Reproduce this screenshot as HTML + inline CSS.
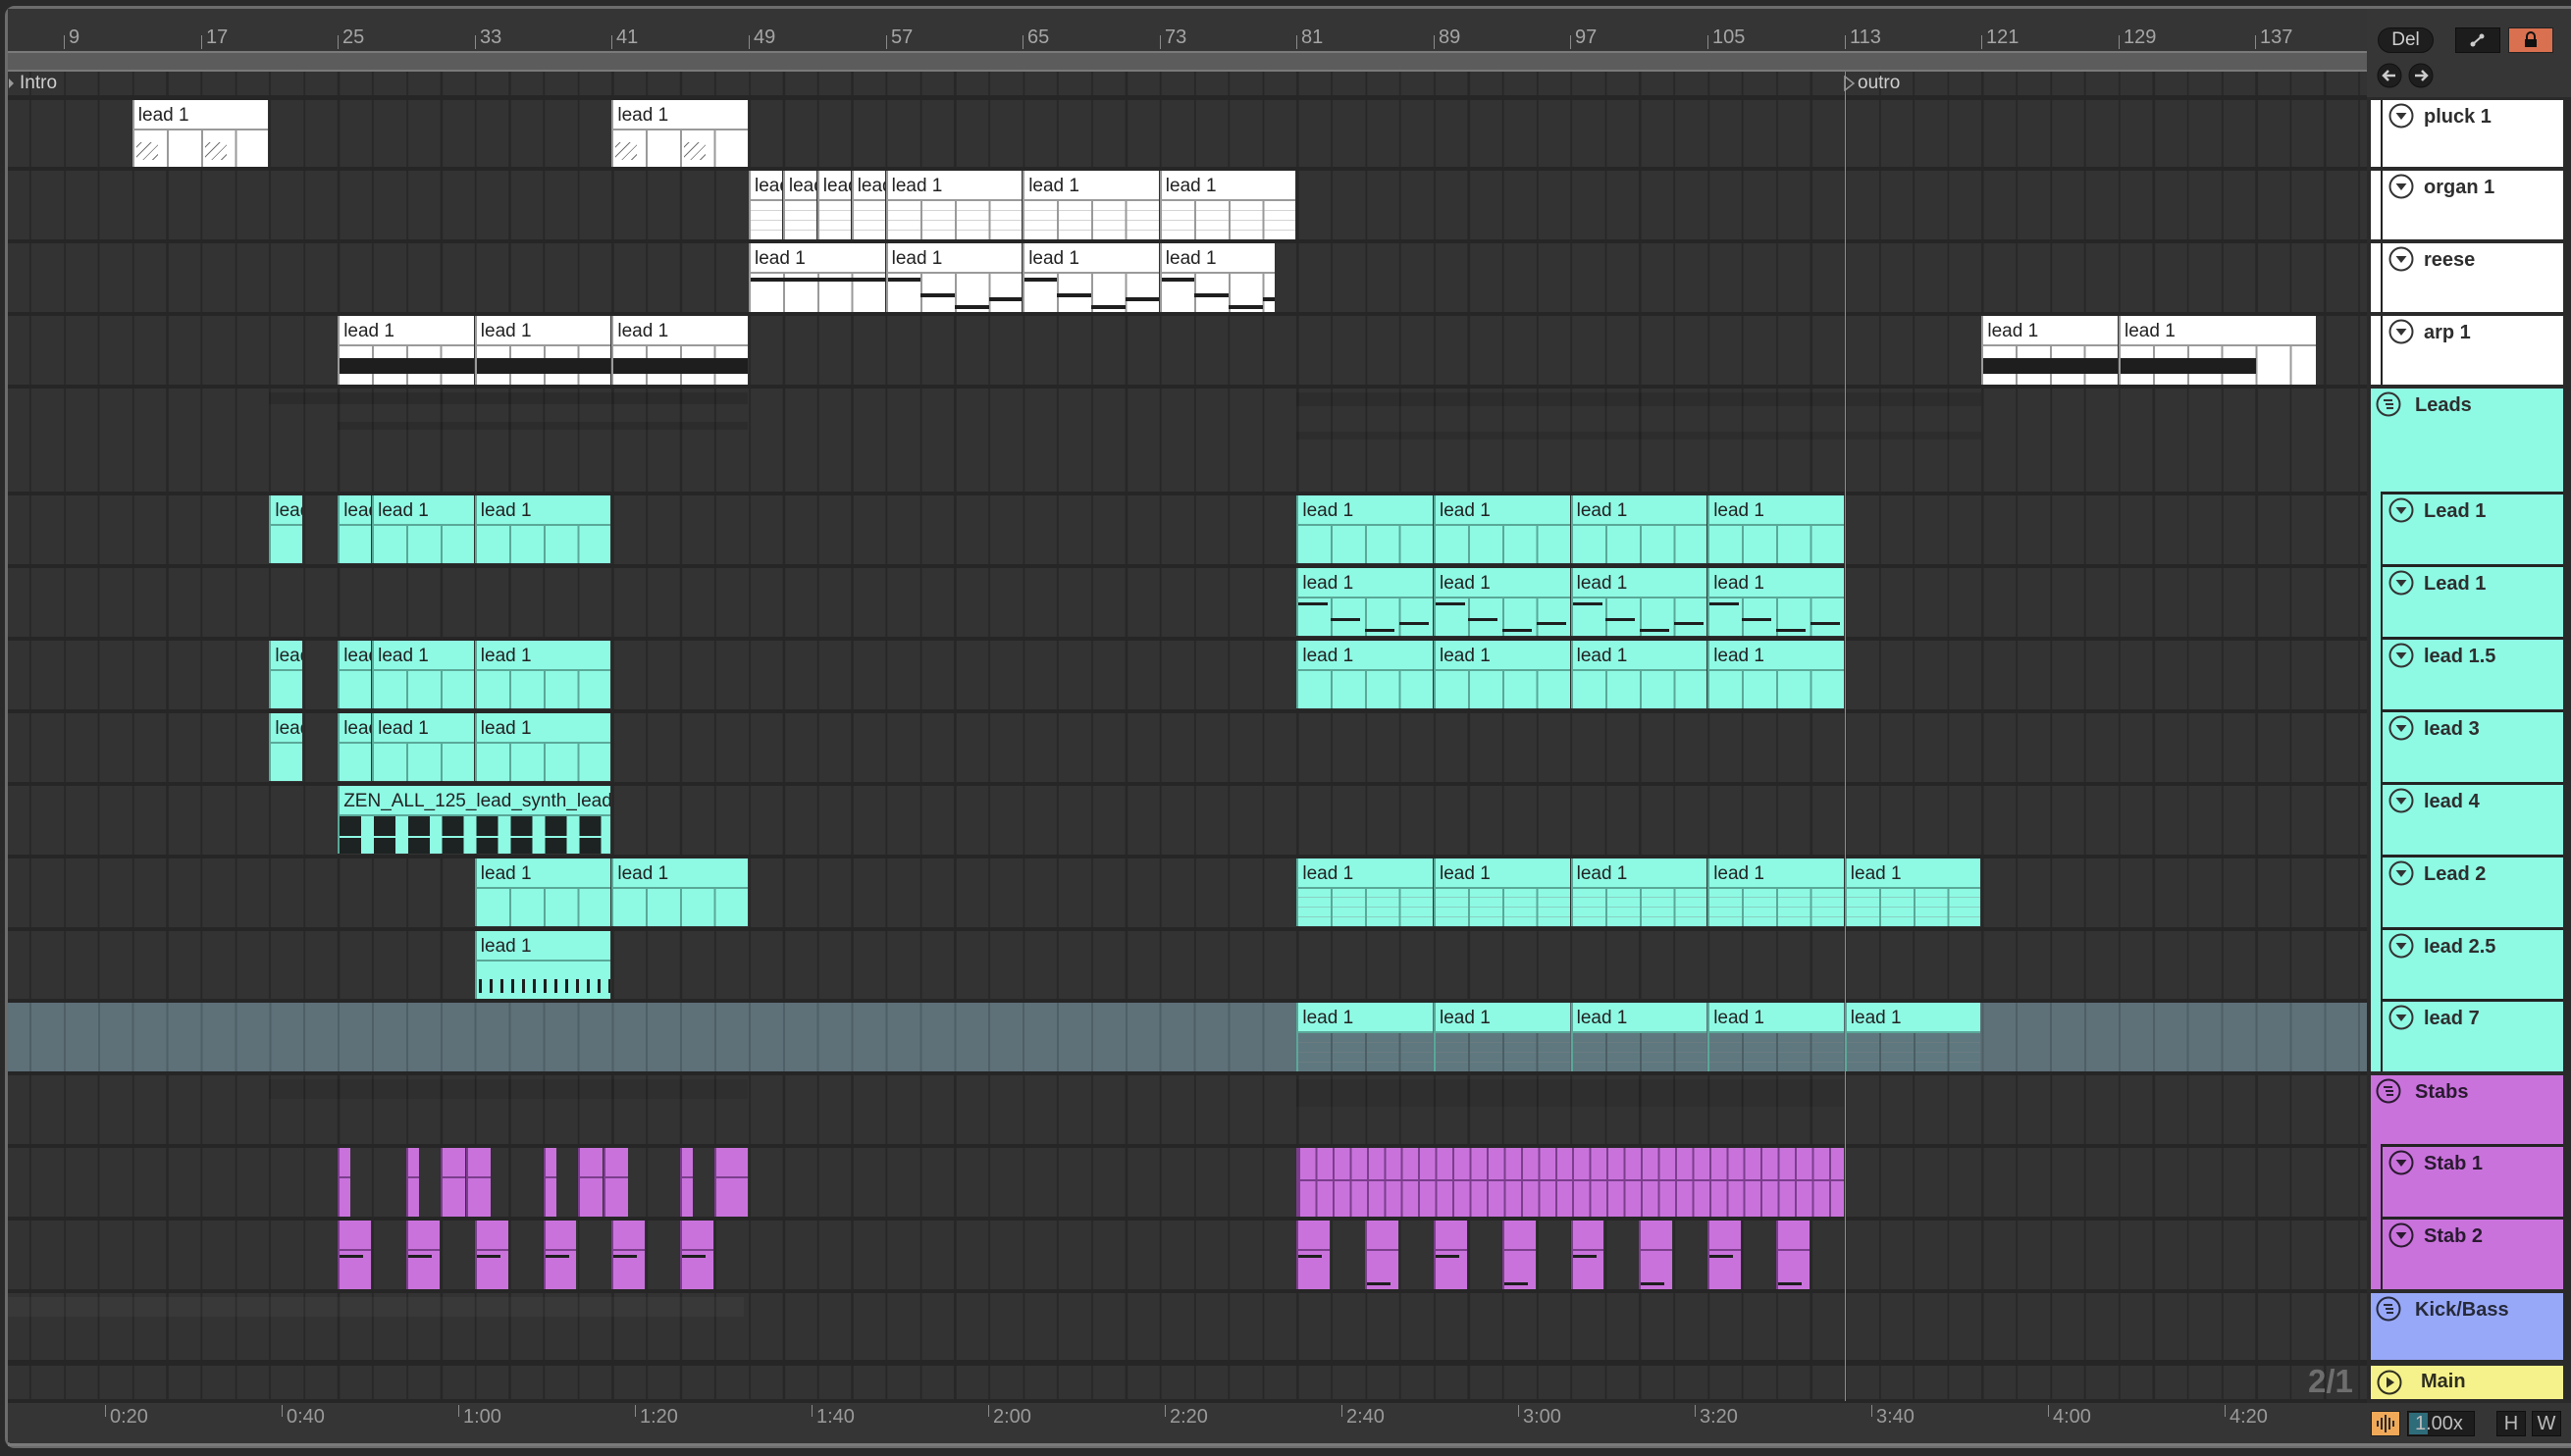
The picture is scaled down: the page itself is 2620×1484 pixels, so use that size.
<!DOCTYPE html>
<html><head><meta charset="utf-8"><style>
*{box-sizing:border-box;margin:0;padding:0}
body{width:2620px;height:1484px;overflow:hidden;background:#2a2a2a;position:relative;font-family:"Liberation Sans",sans-serif}
.abs{position:absolute}
#frame{position:absolute;left:5px;top:6px;width:2640px;height:1470px;border:3px solid #6c6c6c;border-radius:10px;background:#353535}
#grid{position:absolute;left:8px;top:73px;width:2404px;height:1355px;background-color:#333;background-image:repeating-linear-gradient(90deg,#272727 0 2px,transparent 2px 34.9px);background-position:22px 0}
.sep{position:absolute;left:8px;width:2404px;height:4px;background:#262626}
.r{position:absolute;left:0;width:2412px}
.c{position:absolute;top:0;height:100%;left:calc(65px + (var(--s) - 9) * 17.45px);width:calc((var(--e) - var(--s)) * 17.45px - 1px);overflow:hidden;border-left:2px solid var(--l)}
.c .n{height:31px;line-height:31px;padding-left:4px;font-size:19px;color:#222;white-space:nowrap;overflow:hidden;border-bottom:2px solid var(--l)}
.c .b{position:absolute;top:31px;left:-2px;right:0;bottom:0;background-image:repeating-linear-gradient(90deg,var(--l) 0 2px,transparent 2px 34.9px)}
.w{background:#fff;--l:#9a9a9a}
.cy{background:#8efae4;--l:#5aa898}
.pu{background:#c972dc;--l:#7b3e8c}
.dots{background-image:repeating-linear-gradient(90deg,var(--l) 0 2px,transparent 2px 34.9px),repeating-linear-gradient(0deg,transparent 0 9px,rgba(130,130,130,.35) 9px 10px) !important}
.ln{position:absolute;height:4px;background:#1e1e1e}
.th{position:absolute;left:2416px;width:196px;font-weight:bold;font-size:20px;color:#2e2e2e}
.th .in{position:absolute;left:10px;top:0;right:0;bottom:0;border-left:2px solid #232323}
.th svg{position:absolute}
.th span{position:absolute;top:6px}
.rl{position:absolute;top:27px;font-size:20px;color:#a5a5a5}
.tk{position:absolute;top:36px;width:1px;height:14px;background:#8a8a8a}
.tl{position:absolute;top:1433px;font-size:20px;color:#9a9a9a}
.tt{position:absolute;top:1432px;width:1px;height:12px;background:#8a8a8a}
.nt{position:absolute;left:4px;top:12px;width:22px;height:18px;background:repeating-linear-gradient(135deg,transparent 0 3px,rgba(0,0,0,.55) 3px 4px,transparent 4px 7px)}
</style></head><body>
<div id="frame"></div>
<div class="abs" style="left:8px;top:9px;width:2404px;height:43px;background:#353535"></div>
<div class="abs" style="left:8px;top:52px;width:2404px;height:21px;background:#5c5c5c;border-top:2px solid #7a7a7a;border-bottom:2px solid #7a7a7a"></div>
<div class="tk" style="left:65px"></div><div class="rl" style="left:70px">9</div>
<div class="tk" style="left:205px"></div><div class="rl" style="left:210px">17</div>
<div class="tk" style="left:344px"></div><div class="rl" style="left:349px">25</div>
<div class="tk" style="left:484px"></div><div class="rl" style="left:489px">33</div>
<div class="tk" style="left:623px"></div><div class="rl" style="left:628px">41</div>
<div class="tk" style="left:763px"></div><div class="rl" style="left:768px">49</div>
<div class="tk" style="left:903px"></div><div class="rl" style="left:908px">57</div>
<div class="tk" style="left:1042px"></div><div class="rl" style="left:1047px">65</div>
<div class="tk" style="left:1182px"></div><div class="rl" style="left:1187px">73</div>
<div class="tk" style="left:1321px"></div><div class="rl" style="left:1326px">81</div>
<div class="tk" style="left:1461px"></div><div class="rl" style="left:1466px">89</div>
<div class="tk" style="left:1600px"></div><div class="rl" style="left:1605px">97</div>
<div class="tk" style="left:1740px"></div><div class="rl" style="left:1745px">105</div>
<div class="tk" style="left:1880px"></div><div class="rl" style="left:1885px">113</div>
<div class="tk" style="left:2019px"></div><div class="rl" style="left:2024px">121</div>
<div class="tk" style="left:2159px"></div><div class="rl" style="left:2164px">129</div>
<div class="tk" style="left:2298px"></div><div class="rl" style="left:2303px">137</div>

<div id="grid"></div>
<div class="abs" style="left:274px;top:400px;width:488px;height:12px;background:rgba(0,0,0,.12)"></div>
<div class="abs" style="left:344px;top:430px;width:418px;height:8px;background:rgba(0,0,0,.12)"></div>
<div class="abs" style="left:1321px;top:400px;width:698px;height:14px;background:rgba(0,0,0,.1)"></div>
<div class="abs" style="left:1321px;top:440px;width:698px;height:8px;background:rgba(0,0,0,.1)"></div>
<div class="abs" style="left:1321px;top:1100px;width:558px;height:28px;background:rgba(0,0,0,.08)"></div>
<div class="abs" style="left:274px;top:1100px;width:488px;height:20px;background:rgba(0,0,0,.08)"></div>
<div class="abs" style="left:8px;top:1322px;width:750px;height:20px;background:rgba(255,255,255,.03)"></div>
<div class="abs" style="left:8px;top:1022px;width:2404px;height:70px;background-color:#5e7078;background-image:repeating-linear-gradient(90deg,#4f5f66 0 2px,transparent 2px 34.9px);background-position:22px 0"></div>

<div class="sep" style="top:97px;height:5px"></div>
<div class="sep" style="top:170px"></div>
<div class="sep" style="top:244px"></div>
<div class="sep" style="top:318px"></div>
<div class="sep" style="top:392px"></div>
<div class="sep" style="top:501px"></div>
<div class="sep" style="top:575px"></div>
<div class="sep" style="top:649px"></div>
<div class="sep" style="top:723px"></div>
<div class="sep" style="top:797px"></div>
<div class="sep" style="top:871px"></div>
<div class="sep" style="top:945px"></div>
<div class="sep" style="top:1018px"></div>
<div class="sep" style="top:1092px"></div>
<div class="sep" style="top:1166px"></div>
<div class="sep" style="top:1240px"></div>
<div class="sep" style="top:1314px"></div>
<div class="sep" style="top:1386px;height:6px"></div>
<div class="sep" style="top:1426px;height:4px"></div>

<div class="abs" style="left:9px;top:80px;width:0;height:0;border-top:5px solid transparent;border-bottom:5px solid transparent;border-left:5px solid #999"></div>
<div class="abs" style="left:20px;top:74px;font-size:19px;color:#cfcfcf">Intro</div>
<div class="abs" style="left:1880px;top:73px;width:1px;height:1355px;background:#8d8d8d"></div>
<svg class="abs" style="left:1879px;top:77px" width="12" height="16"><path d="M1 1L10 8L1 15Z" fill="none" stroke="#999" stroke-width="1.5"/></svg>
<div class="abs" style="left:1893px;top:74px;font-size:19px;color:#cfcfcf">outro</div>

<div class="r" style="top:102px;height:68px">
<div class="c w" style="--s:13;--e:21"><div class="n">lead 1</div><div class="b"><div class="nt"></div><div class="nt" style="left:74px"></div></div></div>
<div class="c w" style="--s:41;--e:49"><div class="n">lead 1</div><div class="b"><div class="nt"></div><div class="nt" style="left:74px"></div></div></div>
</div>
<div class="r" style="top:174px;height:70px">
<div class="c w" style="--s:49;--e:51"><div class="n">lead 1</div><div class="b dots"></div></div>
<div class="c w" style="--s:51;--e:53"><div class="n">lead 1</div><div class="b dots"></div></div>
<div class="c w" style="--s:53;--e:55"><div class="n">lead 1</div><div class="b dots"></div></div>
<div class="c w" style="--s:55;--e:57"><div class="n">lead 1</div><div class="b dots"></div></div>
<div class="c w" style="--s:57;--e:65"><div class="n">lead 1</div><div class="b dots"></div></div>
<div class="c w" style="--s:65;--e:73"><div class="n">lead 1</div><div class="b dots"></div></div>
<div class="c w" style="--s:73;--e:81"><div class="n">lead 1</div><div class="b dots"></div></div>
</div>
<div class="r" style="top:248px;height:70px">
<div class="c w" style="--s:49;--e:57"><div class="n">lead 1</div><div class="b"><div class="ln" style="left:0;right:0;top:4px"></div></div></div>
<div class="c w" style="--s:57;--e:65"><div class="n">lead 1</div><div class="b"><div class="ln" style="left:0;width:35px;top:4px"></div><div class="ln" style="left:35px;width:35px;top:20px"></div><div class="ln" style="left:70px;width:35px;top:32px"></div><div class="ln" style="left:105px;width:35px;top:24px"></div></div></div>
<div class="c w" style="--s:65;--e:73"><div class="n">lead 1</div><div class="b"><div class="ln" style="left:0;width:35px;top:4px"></div><div class="ln" style="left:35px;width:35px;top:20px"></div><div class="ln" style="left:70px;width:35px;top:32px"></div><div class="ln" style="left:105px;width:35px;top:24px"></div></div></div>
<div class="c w" style="--s:73;--e:79.8"><div class="n">lead 1</div><div class="b"><div class="ln" style="left:0;width:35px;top:4px"></div><div class="ln" style="left:35px;width:35px;top:20px"></div><div class="ln" style="left:70px;width:35px;top:32px"></div><div class="ln" style="left:105px;width:35px;top:24px"></div></div></div>
</div>
<div class="r" style="top:322px;height:70px">
<div class="c w" style="--s:25;--e:33"><div class="n">lead 1</div><div class="b"><div class="ln" style="left:0;right:0;top:12px;height:16px"></div></div></div>
<div class="c w" style="--s:33;--e:41"><div class="n">lead 1</div><div class="b"><div class="ln" style="left:0;right:0;top:12px;height:16px"></div></div></div>
<div class="c w" style="--s:41;--e:49"><div class="n">lead 1</div><div class="b"><div class="ln" style="left:0;right:0;top:12px;height:16px"></div></div></div>
<div class="c w" style="--s:121;--e:129"><div class="n">lead 1</div><div class="b"><div class="ln" style="left:0;right:0;top:12px;height:16px"></div></div></div>
<div class="c w" style="--s:129;--e:140.6"><div class="n">lead 1</div><div class="b"><div class="ln" style="left:0;width:140px;top:12px;height:16px"></div></div></div>
</div>
<div class="r" style="top:505px;height:69px">
<div class="c cy" style="--s:21;--e:23"><div class="n">lead 1</div><div class="b"></div></div>
<div class="c cy" style="--s:25;--e:27"><div class="n">lead 1</div><div class="b"></div></div>
<div class="c cy" style="--s:27;--e:33"><div class="n">lead 1</div><div class="b"></div></div>
<div class="c cy" style="--s:33;--e:41"><div class="n">lead 1</div><div class="b"></div></div>
<div class="c cy" style="--s:81;--e:89"><div class="n">lead 1</div><div class="b"></div></div>
<div class="c cy" style="--s:89;--e:97"><div class="n">lead 1</div><div class="b"></div></div>
<div class="c cy" style="--s:97;--e:105"><div class="n">lead 1</div><div class="b"></div></div>
<div class="c cy" style="--s:105;--e:113"><div class="n">lead 1</div><div class="b"></div></div>
</div>
<div class="r" style="top:579px;height:69px">
<div class="c cy" style="--s:81;--e:89"><div class="n">lead 1</div><div class="b"><div class="ln" style="left:2px;width:30px;top:4px;height:3px"></div><div class="ln" style="left:35px;width:30px;top:20px;height:3px"></div><div class="ln" style="left:70px;width:30px;top:31px;height:3px"></div><div class="ln" style="left:105px;width:30px;top:24px;height:3px"></div></div></div>
<div class="c cy" style="--s:89;--e:97"><div class="n">lead 1</div><div class="b"><div class="ln" style="left:2px;width:30px;top:4px;height:3px"></div><div class="ln" style="left:35px;width:30px;top:20px;height:3px"></div><div class="ln" style="left:70px;width:30px;top:31px;height:3px"></div><div class="ln" style="left:105px;width:30px;top:24px;height:3px"></div></div></div>
<div class="c cy" style="--s:97;--e:105"><div class="n">lead 1</div><div class="b"><div class="ln" style="left:2px;width:30px;top:4px;height:3px"></div><div class="ln" style="left:35px;width:30px;top:20px;height:3px"></div><div class="ln" style="left:70px;width:30px;top:31px;height:3px"></div><div class="ln" style="left:105px;width:30px;top:24px;height:3px"></div></div></div>
<div class="c cy" style="--s:105;--e:113"><div class="n">lead 1</div><div class="b"><div class="ln" style="left:2px;width:30px;top:4px;height:3px"></div><div class="ln" style="left:35px;width:30px;top:20px;height:3px"></div><div class="ln" style="left:70px;width:30px;top:31px;height:3px"></div><div class="ln" style="left:105px;width:30px;top:24px;height:3px"></div></div></div>
</div>
<div class="r" style="top:653px;height:69px">
<div class="c cy" style="--s:21;--e:23"><div class="n">lead 1</div><div class="b"></div></div>
<div class="c cy" style="--s:25;--e:27"><div class="n">lead 1</div><div class="b"></div></div>
<div class="c cy" style="--s:27;--e:33"><div class="n">lead 1</div><div class="b"></div></div>
<div class="c cy" style="--s:33;--e:41"><div class="n">lead 1</div><div class="b"></div></div>
<div class="c cy" style="--s:81;--e:89"><div class="n">lead 1</div><div class="b"></div></div>
<div class="c cy" style="--s:89;--e:97"><div class="n">lead 1</div><div class="b"></div></div>
<div class="c cy" style="--s:97;--e:105"><div class="n">lead 1</div><div class="b"></div></div>
<div class="c cy" style="--s:105;--e:113"><div class="n">lead 1</div><div class="b"></div></div>
</div>
<div class="r" style="top:727px;height:69px">
<div class="c cy" style="--s:21;--e:23"><div class="n">lead 1</div><div class="b"></div></div>
<div class="c cy" style="--s:25;--e:27"><div class="n">lead 1</div><div class="b"></div></div>
<div class="c cy" style="--s:27;--e:33"><div class="n">lead 1</div><div class="b"></div></div>
<div class="c cy" style="--s:33;--e:41"><div class="n">lead 1</div><div class="b"></div></div>
</div>
<div class="r" style="top:801px;height:69px">
<div class="c cy" style="--s:25;--e:41"><div class="n">ZEN_ALL_125_lead_synth_lead</div><div class="b" style="background-image:linear-gradient(0deg,transparent 0 16px,#8efae4 16px 18px,transparent 18px),repeating-linear-gradient(90deg,#1d2322 0 22px,transparent 22px 34.9px);background-position:0 0,2px 0"></div></div>
</div>
<div class="r" style="top:875px;height:69px">
<div class="c cy" style="--s:33;--e:41"><div class="n">lead 1</div><div class="b"></div></div>
<div class="c cy" style="--s:41;--e:49"><div class="n">lead 1</div><div class="b"></div></div>
<div class="c cy" style="--s:81;--e:89"><div class="n">lead 1</div><div class="b dots"></div></div>
<div class="c cy" style="--s:89;--e:97"><div class="n">lead 1</div><div class="b dots"></div></div>
<div class="c cy" style="--s:97;--e:105"><div class="n">lead 1</div><div class="b dots"></div></div>
<div class="c cy" style="--s:105;--e:113"><div class="n">lead 1</div><div class="b dots"></div></div>
<div class="c cy" style="--s:113;--e:121"><div class="n">lead 1</div><div class="b dots"></div></div>
</div>
<div class="r" style="top:949px;height:69px">
<div class="c cy" style="--s:33;--e:41"><div class="n">lead 1</div><div class="b" style="background-image:linear-gradient(0deg,#8efae4 0 6px,transparent 6px 20px,#8efae4 20px),repeating-linear-gradient(90deg,transparent 0 4px,#1d1d1d 4px 7px,transparent 7px 11px)"></div></div>
</div>
<div class="r" style="top:1022px;height:70px">
<div class="c cy" style="--s:81;--e:89"><div class="n">lead 1</div><div class="b dots" style="background-color:#5f7880;--l:#4b5e64"></div></div>
<div class="c cy" style="--s:89;--e:97"><div class="n">lead 1</div><div class="b dots" style="background-color:#5f7880;--l:#4b5e64"></div></div>
<div class="c cy" style="--s:97;--e:105"><div class="n">lead 1</div><div class="b dots" style="background-color:#5f7880;--l:#4b5e64"></div></div>
<div class="c cy" style="--s:105;--e:113"><div class="n">lead 1</div><div class="b dots" style="background-color:#5f7880;--l:#4b5e64"></div></div>
<div class="c cy" style="--s:113;--e:121"><div class="n">lead 1</div><div class="b dots" style="background-color:#5f7880;--l:#4b5e64"></div></div>
</div>
<div class="r" style="top:1170px;height:70px">
<div class="c pu" style="--s:25;--e:25.8"><div class="n"></div><div class="b"></div></div>
<div class="c pu" style="--s:29;--e:29.8"><div class="n"></div><div class="b"></div></div>
<div class="c pu" style="--s:31;--e:32.5"><div class="n"></div><div class="b"></div></div>
<div class="c pu" style="--s:32.5;--e:34"><div class="n"></div><div class="b"></div></div>
<div class="c pu" style="--s:37;--e:37.8"><div class="n"></div><div class="b"></div></div>
<div class="c pu" style="--s:39;--e:40.5"><div class="n"></div><div class="b"></div></div>
<div class="c pu" style="--s:40.5;--e:42"><div class="n"></div><div class="b"></div></div>
<div class="c pu" style="--s:45;--e:45.8"><div class="n"></div><div class="b"></div></div>
<div class="c pu" style="--s:47;--e:49"><div class="n"></div><div class="b"></div></div>
<div class="abs pu" style="left:1321px;top:0;width:558px;height:70px;border-left:2px solid #7b3e8c;background-image:linear-gradient(0deg,transparent 0 36px,#7b3e8c 36px 38px,transparent 38px),repeating-linear-gradient(90deg,#7b3e8c 0 2px,transparent 2px 17.45px)"></div>
</div>
<div class="r" style="top:1244px;height:70px">
<div class="c pu" style="--s:25;--e:27"><div class="n"></div><div class="b"><div class="ln" style="left:2px;width:24px;top:4px;height:3px"></div></div></div>
<div class="c pu" style="--s:29;--e:31"><div class="n"></div><div class="b"><div class="ln" style="left:2px;width:24px;top:4px;height:3px"></div></div></div>
<div class="c pu" style="--s:33;--e:35"><div class="n"></div><div class="b"><div class="ln" style="left:2px;width:24px;top:4px;height:3px"></div></div></div>
<div class="c pu" style="--s:37;--e:39"><div class="n"></div><div class="b"><div class="ln" style="left:2px;width:24px;top:4px;height:3px"></div></div></div>
<div class="c pu" style="--s:41;--e:43"><div class="n"></div><div class="b"><div class="ln" style="left:2px;width:24px;top:4px;height:3px"></div></div></div>
<div class="c pu" style="--s:45;--e:47"><div class="n"></div><div class="b"><div class="ln" style="left:2px;width:24px;top:4px;height:3px"></div></div></div>
<div class="c pu" style="--s:81;--e:83"><div class="n"></div><div class="b"><div class="ln" style="left:2px;width:24px;top:4px;height:3px"></div></div></div>
<div class="c pu" style="--s:85;--e:87"><div class="n"></div><div class="b"><div class="ln" style="left:2px;width:24px;top:32px;height:3px"></div></div></div>
<div class="c pu" style="--s:89;--e:91"><div class="n"></div><div class="b"><div class="ln" style="left:2px;width:24px;top:4px;height:3px"></div></div></div>
<div class="c pu" style="--s:93;--e:95"><div class="n"></div><div class="b"><div class="ln" style="left:2px;width:24px;top:32px;height:3px"></div></div></div>
<div class="c pu" style="--s:97;--e:99"><div class="n"></div><div class="b"><div class="ln" style="left:2px;width:24px;top:4px;height:3px"></div></div></div>
<div class="c pu" style="--s:101;--e:103"><div class="n"></div><div class="b"><div class="ln" style="left:2px;width:24px;top:32px;height:3px"></div></div></div>
<div class="c pu" style="--s:105;--e:107"><div class="n"></div><div class="b"><div class="ln" style="left:2px;width:24px;top:4px;height:3px"></div></div></div>
<div class="c pu" style="--s:109;--e:111"><div class="n"></div><div class="b"><div class="ln" style="left:2px;width:24px;top:32px;height:3px"></div></div></div>
</div>

<div class="abs" style="left:2352px;top:1389px;font-size:33px;font-weight:bold;color:#6e6e6e">2/1</div>

<div class="abs" style="left:8px;top:1430px;width:2404px;height:40px;background:#353535"></div>
<div class="tt" style="left:107px"></div><div class="tl" style="left:112px">0:20</div>
<div class="tt" style="left:287px"></div><div class="tl" style="left:292px">0:40</div>
<div class="tt" style="left:467px"></div><div class="tl" style="left:472px">1:00</div>
<div class="tt" style="left:647px"></div><div class="tl" style="left:652px">1:20</div>
<div class="tt" style="left:827px"></div><div class="tl" style="left:832px">1:40</div>
<div class="tt" style="left:1007px"></div><div class="tl" style="left:1012px">2:00</div>
<div class="tt" style="left:1187px"></div><div class="tl" style="left:1192px">2:20</div>
<div class="tt" style="left:1367px"></div><div class="tl" style="left:1372px">2:40</div>
<div class="tt" style="left:1547px"></div><div class="tl" style="left:1552px">3:00</div>
<div class="tt" style="left:1727px"></div><div class="tl" style="left:1732px">3:20</div>
<div class="tt" style="left:1907px"></div><div class="tl" style="left:1912px">3:40</div>
<div class="tt" style="left:2087px"></div><div class="tl" style="left:2092px">4:00</div>
<div class="tt" style="left:2267px"></div><div class="tl" style="left:2272px">4:20</div>
<div class="abs" style="left:8px;top:1471px;width:2620px;height:3px;background:#7a7a7a"></div>

<div class="abs" style="left:2412px;top:9px;width:208px;height:90px;background:#363636"></div>
<div class="abs" style="left:2412px;top:99px;width:208px;height:1331px;background:#2a2a2a"></div>
<div class="abs" style="left:2423px;top:28px;width:57px;height:26px;border-radius:13px;background:#1e1e1e;border:1px solid #111;color:#cfcfcf;font-size:19px;text-align:center;line-height:24px">Del</div>
<div class="abs" style="left:2502px;top:28px;width:46px;height:26px;background:#1c1c1c;border:1px solid #0f0f0f"></div>
<svg class="abs" style="left:2515px;top:32px" width="20" height="18"><path d="M5 13L14 5" stroke="#ccc" stroke-width="2"/><circle cx="5" cy="13" r="2.5" fill="#ccc"/><circle cx="14" cy="5" r="2.5" fill="#ccc"/></svg>
<div class="abs" style="left:2556px;top:28px;width:46px;height:26px;background:#d9704f;border:1px solid #222"></div>
<svg class="abs" style="left:2569px;top:31px" width="20" height="20"><path d="M6 9V6a4 4 0 0 1 8 0v3" fill="none" stroke="#111" stroke-width="2"/><rect x="4" y="9" width="12" height="8" fill="#111"/></svg>
<svg class="abs" style="left:2422px;top:64px" width="60" height="28"><circle cx="13" cy="13" r="12" fill="#1e1e1e" stroke="#111"/><circle cx="45" cy="13" r="12" fill="#1e1e1e" stroke="#111"/><path d="M19 13H8M12 8L7 13L12 18" fill="none" stroke="#ccc" stroke-width="2.5"/><path d="M39 13H50M46 8L51 13L46 18" fill="none" stroke="#ccc" stroke-width="2.5"/></svg>

<div class="th" style="top:102px;height:68px;background:#fff"><div class="in" style="background:#fff"><svg style="left:6px;top:3px" width="26" height="26"><circle cx="13" cy="13" r="11.5" fill="none" stroke="#333" stroke-width="2"/><path d="M7.5 10h11l-5.5 7z" fill="#333"/></svg><span style="left:42px">pluck 1</span></div></div>
<div class="th" style="top:174px;height:70px;background:#fff"><div class="in" style="background:#fff"><svg style="left:6px;top:3px" width="26" height="26"><circle cx="13" cy="13" r="11.5" fill="none" stroke="#333" stroke-width="2"/><path d="M7.5 10h11l-5.5 7z" fill="#333"/></svg><span style="left:42px">organ 1</span></div></div>
<div class="th" style="top:248px;height:70px;background:#fff"><div class="in" style="background:#fff"><svg style="left:6px;top:3px" width="26" height="26"><circle cx="13" cy="13" r="11.5" fill="none" stroke="#333" stroke-width="2"/><path d="M7.5 10h11l-5.5 7z" fill="#333"/></svg><span style="left:42px">reese</span></div></div>
<div class="th" style="top:322px;height:70px;background:#fff"><div class="in" style="background:#fff"><svg style="left:6px;top:3px" width="26" height="26"><circle cx="13" cy="13" r="11.5" fill="none" stroke="#333" stroke-width="2"/><path d="M7.5 10h11l-5.5 7z" fill="#333"/></svg><span style="left:42px">arp 1</span></div></div>

<div class="th" style="top:396px;height:105px;background:#8efae4"><svg style="left:5px;top:3px" width="26" height="26"><circle cx="13" cy="13" r="11.5" fill="none" stroke="#333" stroke-width="2"/><path d="M8 9h9M10 13h8M11 17h7" stroke="#333" stroke-width="2"/></svg><span style="left:45px">Leads</span></div>
<div class="th" style="top:501px;height:74px;background:#8efae4"><div class="in" style="border-top:3px solid #232323;background:#8efae4"><svg style="left:6px;top:3px" width="26" height="26"><circle cx="13" cy="13" r="11.5" fill="none" stroke="#333" stroke-width="2"/><path d="M7.5 10h11l-5.5 7z" fill="#333"/></svg><span style="left:42px">Lead 1</span></div></div>
<div class="th" style="top:575px;height:74px;background:#8efae4"><div class="in" style="border-top:3px solid #232323;background:#8efae4"><svg style="left:6px;top:3px" width="26" height="26"><circle cx="13" cy="13" r="11.5" fill="none" stroke="#333" stroke-width="2"/><path d="M7.5 10h11l-5.5 7z" fill="#333"/></svg><span style="left:42px">Lead 1</span></div></div>
<div class="th" style="top:649px;height:74px;background:#8efae4"><div class="in" style="border-top:3px solid #232323;background:#8efae4"><svg style="left:6px;top:3px" width="26" height="26"><circle cx="13" cy="13" r="11.5" fill="none" stroke="#333" stroke-width="2"/><path d="M7.5 10h11l-5.5 7z" fill="#333"/></svg><span style="left:42px">lead 1.5</span></div></div>
<div class="th" style="top:723px;height:74px;background:#8efae4"><div class="in" style="border-top:3px solid #232323;background:#8efae4"><svg style="left:6px;top:3px" width="26" height="26"><circle cx="13" cy="13" r="11.5" fill="none" stroke="#333" stroke-width="2"/><path d="M7.5 10h11l-5.5 7z" fill="#333"/></svg><span style="left:42px">lead 3</span></div></div>
<div class="th" style="top:797px;height:74px;background:#8efae4"><div class="in" style="border-top:3px solid #232323;background:#8efae4"><svg style="left:6px;top:3px" width="26" height="26"><circle cx="13" cy="13" r="11.5" fill="none" stroke="#333" stroke-width="2"/><path d="M7.5 10h11l-5.5 7z" fill="#333"/></svg><span style="left:42px">lead 4</span></div></div>
<div class="th" style="top:871px;height:74px;background:#8efae4"><div class="in" style="border-top:3px solid #232323;background:#8efae4"><svg style="left:6px;top:3px" width="26" height="26"><circle cx="13" cy="13" r="11.5" fill="none" stroke="#333" stroke-width="2"/><path d="M7.5 10h11l-5.5 7z" fill="#333"/></svg><span style="left:42px">Lead 2</span></div></div>
<div class="th" style="top:945px;height:73px;background:#8efae4"><div class="in" style="border-top:3px solid #232323;background:#8efae4"><svg style="left:6px;top:3px" width="26" height="26"><circle cx="13" cy="13" r="11.5" fill="none" stroke="#333" stroke-width="2"/><path d="M7.5 10h11l-5.5 7z" fill="#333"/></svg><span style="left:42px">lead 2.5</span></div></div>
<div class="th" style="top:1018px;height:74px;background:#8efae4"><div class="in" style="border-top:3px solid #232323;background:#8efae4"><svg style="left:6px;top:3px" width="26" height="26"><circle cx="13" cy="13" r="11.5" fill="none" stroke="#333" stroke-width="2"/><path d="M7.5 10h11l-5.5 7z" fill="#333"/></svg><span style="left:42px">lead 7</span></div></div>

<div class="th" style="top:1096px;height:70px;background:#c972dc;color:#2a1a30"><svg style="left:5px;top:3px" width="26" height="26"><circle cx="13" cy="13" r="11.5" fill="none" stroke="#2a1a30" stroke-width="2"/><path d="M8 9h9M10 13h8M11 17h7" stroke="#2a1a30" stroke-width="2"/></svg><span style="left:45px">Stabs</span></div>
<div class="th" style="top:1166px;height:74px;background:#c972dc;color:#2a1a30"><div class="in" style="border-top:3px solid #232323;background:#c972dc"><svg style="left:6px;top:3px" width="26" height="26"><circle cx="13" cy="13" r="11.5" fill="none" stroke="#2a1a30" stroke-width="2"/><path d="M7.5 10h11l-5.5 7z" fill="#2a1a30"/></svg><span style="left:42px">Stab 1</span></div></div>
<div class="th" style="top:1240px;height:74px;background:#c972dc;color:#2a1a30"><div class="in" style="border-top:3px solid #232323;background:#c972dc"><svg style="left:6px;top:3px" width="26" height="26"><circle cx="13" cy="13" r="11.5" fill="none" stroke="#2a1a30" stroke-width="2"/><path d="M7.5 10h11l-5.5 7z" fill="#2a1a30"/></svg><span style="left:42px">Stab 2</span></div></div>
<div class="th" style="top:1318px;height:68px;background:#98a8f8;color:#262a3a"><svg style="left:5px;top:3px" width="26" height="26"><circle cx="13" cy="13" r="11.5" fill="none" stroke="#262a3a" stroke-width="2"/><path d="M8 9h9M10 13h8M11 17h7" stroke="#262a3a" stroke-width="2"/></svg><span style="left:45px">Kick/Bass</span></div>
<div class="th" style="top:1392px;height:34px;background:#f6f28b;color:#2e2e20"><svg style="left:6px;top:4px" width="26" height="26"><circle cx="13" cy="13" r="11.5" fill="none" stroke="#2e2e20" stroke-width="2"/><path d="M10 7.5v11l8-5.5z" fill="#2e2e20"/></svg><span style="left:51px;top:5px">Main</span></div>

<div class="abs" style="left:2412px;top:1430px;width:208px;height:41px;background:#353535"></div>
<div class="abs" style="left:2416px;top:1438px;width:30px;height:26px;background:#f0a958;border:1px solid #222"></div>
<svg class="abs" style="left:2419px;top:1441px" width="24" height="20"><path d="M4 7v6M8 4v12M12 1v18M16 4v12M20 7v6" stroke="#2a2a2a" stroke-width="2"/></svg>
<div class="abs" style="left:2453px;top:1438px;width:69px;height:26px;background:#1d1d1d;border:1px solid #0f0f0f"></div>
<div class="abs" style="left:2455px;top:1440px;width:19px;height:22px;background:#2e6c7a"></div>
<div class="abs" style="left:2461px;top:1440px;font-size:20px;color:#bdbdbd">1.00x</div>
<div class="abs" style="left:2544px;top:1438px;width:30px;height:26px;background:#1d1d1d;border:1px solid #0f0f0f;color:#bbb;font-size:20px;text-align:center;line-height:24px">H</div>
<div class="abs" style="left:2580px;top:1438px;width:30px;height:26px;background:#1d1d1d;border:1px solid #0f0f0f;color:#bbb;font-size:20px;text-align:center;line-height:24px">W</div>
</body></html>
